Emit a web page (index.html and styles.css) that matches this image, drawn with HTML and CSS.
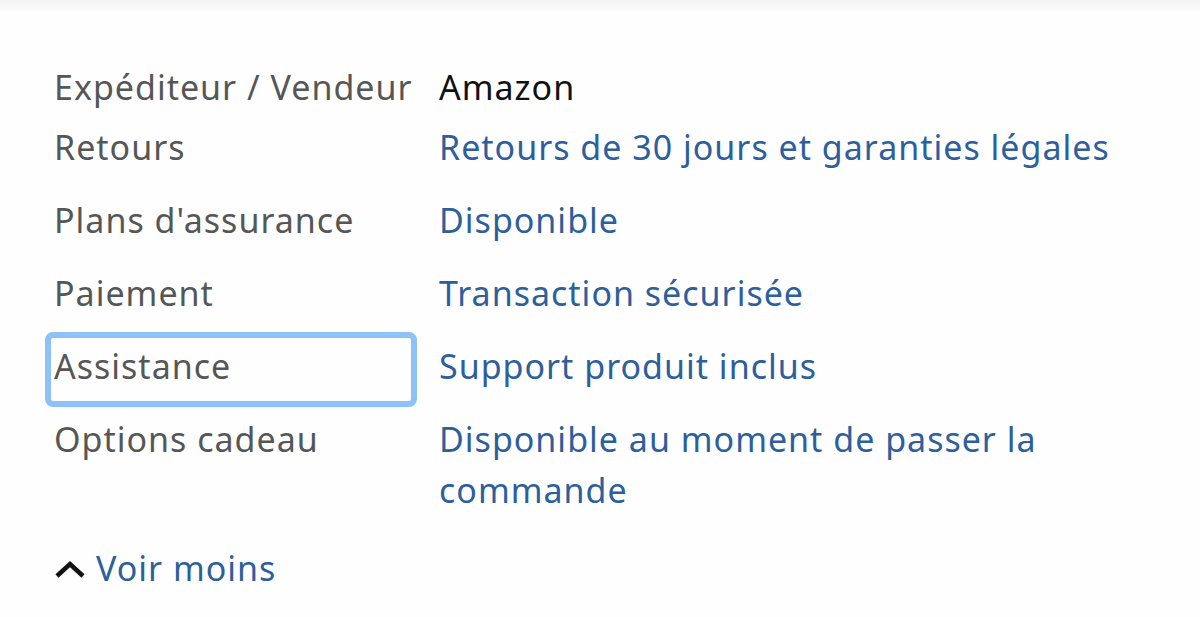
FILE: index.html
```html
<!DOCTYPE html>
<html lang="fr">
<head>
<meta charset="utf-8">
<link rel="stylesheet" href="styles.css">
</head>
<body>
<div class="topshade"></div>
<main class="details">
  <div class="table">
    <div class="row first">
      <div class="label">Expéditeur / Vendeur</div>
      <div class="value plain">Amazon</div>
    </div>
    <div class="row">
      <div class="label">Retours</div>
      <div class="value link">Retours de 30 jours et garanties légales</div>
    </div>
    <div class="row">
      <div class="label">Plans d'assurance</div>
      <div class="value link">Disponible</div>
    </div>
    <div class="row">
      <div class="label">Paiement</div>
      <div class="value link">Transaction sécurisée</div>
    </div>
    <div class="row">
      <div class="label focused">Assistance</div>
      <div class="value link">Support produit inclus</div>
    </div>
    <div class="row">
      <div class="label">Options cadeau</div>
      <div class="value link wrap">Disponible au moment de passer la commande</div>
    </div>
  </div>
  <div class="toggle">
    <svg class="chev" width="32" height="20" viewBox="0 0 32 20"><path d="M3 17 L16 5 L29 17" fill="none" stroke="#111" stroke-width="4.5"/></svg>
    <span class="link">Voir moins</span>
  </div>
</main>
</body>
</html>
```
FILE: styles.css
```css
html, body {
  margin: 0;
  padding: 0;
  background: #fefefe;
}
body {
  font-family: "Noto Sans", "Open Sans", sans-serif;
  font-size: 34px;
  line-height: 51px;
  letter-spacing: 1px;
  width: 1200px;
  height: 617px;
  overflow: hidden;
  position: relative;
}
.topshade {
  position: absolute;
  left: 0;
  top: 0;
  width: 100%;
  height: 14px;
  background: linear-gradient(#f3f3f3, rgba(254,254,254,0));
}
.details {
  padding: 62px 0 0 54px;
}
.table {
  display: flex;
  flex-direction: column;
}
.row {
  display: grid;
  grid-template-columns: 385px 720px;
}
.row .label, .row .value {
  padding: 11px 0;
}
.row.first {
  margin-bottom: -2px;
}
.row.first .label, .row.first .value {
  padding: 0;
}
.label {
  color: #555757;
}
.row .label.focused {
  margin: 2px 22px -4px -9px;
  padding: 3px 0 9px 3px;
  border: 6px solid #8cc2f8;
  border-radius: 8px;
}
.plain { color: #0f1111; }
.link { color: #2d5f9c; }
.toggle {
  display: flex;
  align-items: center;
  gap: 10px;
  margin-top: 16px;
}
.chev { display: block; }
```
